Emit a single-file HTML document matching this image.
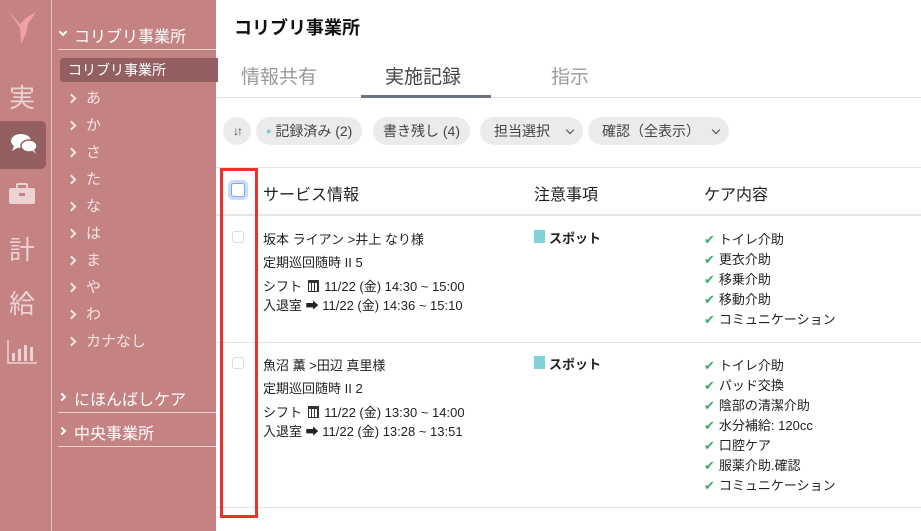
<!DOCTYPE html>
<html><head><meta charset="utf-8"><style>
*{margin:0;padding:0;box-sizing:border-box}
body{width:921px;height:531px;overflow:hidden;background:#fff;font-family:"Liberation Sans","Noto Sans CJK JP",sans-serif;position:relative;color:#222}
.a{position:absolute;white-space:nowrap}
#rail{left:0;top:0;width:52px;height:531px;background:#c48283;border-right:1px solid #e2c0c0}
#side{left:52px;top:0;width:164px;height:531px;background:#c48283}
.rk{color:#ecd3d3;font-size:26px;left:9px}
.kn{color:#f3e3e3;font-size:15px;left:68px}
.kn:before{content:"";position:absolute;left:0;top:8px;width:5px;height:5px;border-right:2px solid #f3e3e3;border-top:2px solid #f3e3e3;transform:rotate(45deg)}
.kn span{margin-left:18px}
.grp{color:#fff;font-size:16px;left:58px;width:158px;border-bottom:1px solid #ead0d0;padding:0 0 2px 16px}
.chev{position:absolute;left:1px;top:8px;width:6px;height:6px;border-right:2px solid #fff;border-top:2px solid #fff;transform:rotate(45deg)}
.tab{font-size:19px;top:62px;color:#999}
.pill{top:117px;height:28px;background:#ebebeb;border-radius:14px;font-size:14px;color:#444;line-height:28px;padding:0 10px}
.hl{height:1px;background:#e4e4e4;left:216px;right:0}
.t{font-size:13px;color:#222}
.c{font-size:13px;color:#222;left:704px}
.c:before{content:"✔";color:#3cab6a;margin-right:4px}
.cb{width:12px;height:12px;border:1px solid #ddd;border-radius:3px;left:232px}
.dd{position:absolute;right:10px;top:10px;width:6px;height:6px;border-right:1.5px solid #444;border-bottom:1.5px solid #444;transform:rotate(45deg)}
.cal{display:inline-block;width:11px;height:12px;border:1px solid #333;border-top:3px solid #333;vertical-align:-1px;background:repeating-linear-gradient(90deg,#fff 0 2px,#333 2px 3px),#fff;margin:0 2px}
</style></head><body>
<div class="a" id="rail"></div>
<div class="a" id="side"></div>
<svg class="a" style="left:6px;top:8px" width="32" height="38" viewBox="0 0 32 38"><path d="M2 2 L14 16 L20 10 L30 4 L22 16 L20 26 L15 36 L14 20 Z" fill="#f2a0a5"/></svg>
<div class="a rk" style="top:78px">実</div>
<div class="a" style="left:0;top:121px;width:46px;height:48px;background:#935f60;border-radius:0 5px 5px 0"></div>
<svg class="a" style="left:10px;top:132px" width="28" height="24" viewBox="0 0 28 24"><ellipse cx="11" cy="9" rx="10" ry="7" fill="#fff"/><path d="M4 14 L2 19 L9 15Z" fill="#fff"/><ellipse cx="19" cy="14" rx="8" ry="6" fill="#fff" stroke="#935f60" stroke-width="1.5"/><path d="M22 18 L26 22 L23 16Z" fill="#fff"/></svg>
<svg class="a" style="left:9px;top:183px" width="26" height="22" viewBox="0 0 26 22"><rect x="8" y="1" width="10" height="5" rx="1" fill="none" stroke="#ecd3d3" stroke-width="2"/><rect x="0" y="5" width="26" height="16" rx="2" fill="#ecd3d3"/><rect x="10" y="10" width="6" height="3" fill="#c48283"/></svg>
<div class="a rk" style="top:230px">計</div>
<div class="a rk" style="top:284px">給</div>
<svg class="a" style="left:7px;top:340px" width="30" height="24" viewBox="0 0 30 24"><path d="M1 0V23H30" stroke="#ecd3d3" stroke-width="1.5" fill="none"/><rect x="5" y="13" width="3" height="8" fill="#ecd3d3"/><rect x="11" y="9" width="3" height="12" fill="#ecd3d3"/><rect x="17" y="5" width="3" height="16" fill="#ecd3d3"/><rect x="23" y="7" width="3" height="14" fill="#ecd3d3"/></svg>
<div class="a grp" style="top:23px"><span class="chev" style="transform:rotate(135deg);top:6px;left:2px"></span>コリブリ事業所</div>
<div class="a" style="left:60px;top:58px;width:158px;height:24px;background:#935f60;border-radius:3px 0 0 3px;color:#fff;font-size:14px;line-height:24px;padding-left:8px">コリブリ事業所</div>
<div class="a kn" style="top:87px"><span>あ</span></div>
<div class="a kn" style="top:114px"><span>か</span></div>
<div class="a kn" style="top:141px"><span>さ</span></div>
<div class="a kn" style="top:168px"><span>た</span></div>
<div class="a kn" style="top:195px"><span>な</span></div>
<div class="a kn" style="top:222px"><span>は</span></div>
<div class="a kn" style="top:249px"><span>ま</span></div>
<div class="a kn" style="top:276px"><span>や</span></div>
<div class="a kn" style="top:303px"><span>わ</span></div>
<div class="a kn" style="top:330px"><span>カナなし</span></div>
<div class="a grp" style="top:386px"><span class="chev"></span>にほんばしケア</div>
<div class="a grp" style="top:420px"><span class="chev"></span>中央事業所</div>

<div class="a" style="left:234px;top:14px;font-size:18px;font-weight:bold;color:#111">コリブリ事業所</div>
<div class="a tab" style="left:241px">情報共有</div>
<div class="a tab" style="left:385px;color:#444">実施記録</div>
<div class="a tab" style="left:551px">指示</div>
<div class="a hl" style="top:97px"></div>
<div class="a" style="left:361px;top:95px;width:130px;height:3px;background:#6b7280"></div>

<div class="a pill" style="left:223px;width:28px;padding:0;text-align:center;font-size:12px;font-weight:bold;letter-spacing:-2px">↓↑</div>
<div class="a pill" style="left:256px"><span style="color:#7cc;font-size:9px;vertical-align:2px">●</span> 記録済み (2)</div>
<div class="a pill" style="left:373px">書き残し (4)</div>
<div class="a pill" style="left:480px;width:103px;padding-left:14px">担当選択 <span class="dd"></span></div>
<div class="a pill" style="left:588px;width:141px;padding-left:14px">確認（全表示）<span class="dd"></span></div>

<div class="a hl" style="top:167px"></div>
<div class="a" style="left:228px;top:180px;width:20px;height:20px;border-radius:5px;background:#c9dcfb"></div>
<div class="a" style="left:231px;top:183px;width:14px;height:14px;border-radius:3px;border:1.5px solid #7ea8ef;background:#fff"></div>
<div class="a" style="left:263px;top:181px;font-size:16px">サービス情報</div>
<div class="a" style="left:534px;top:181px;font-size:16px">注意事項</div>
<div class="a" style="left:704px;top:181px;font-size:16px">ケア内容</div>
<div class="a" style="left:216px;right:0;top:214px;height:2px;background:#e4e6ea"></div>

<div class="a cb" style="top:231px"></div>
<div class="a t" style="left:263px;top:229px">坂本 ライアン &gt;井上 なり様</div>
<div class="a t" style="left:263px;top:252px">定期巡回随時 II 5</div>
<div class="a t" style="left:263px;top:276px">シフト <span class="cal"></span> 11/22 (金) 14:30 ~ 15:00</div>
<div class="a t" style="left:263px;top:295px">入退室 <b>➡</b> 11/22 (金) 14:36 ~ 15:10</div>
<div class="a" style="left:534px;top:230px;width:11px;height:13px;background:#82d0da"></div>
<div class="a t" style="left:549px;top:228px;font-weight:bold">スポット</div>
<div class="a c" style="top:229px">トイレ介助</div>
<div class="a c" style="top:249px">更衣介助</div>
<div class="a c" style="top:269px">移乗介助</div>
<div class="a c" style="top:289px">移動介助</div>
<div class="a c" style="top:309px">コミュニケーション</div>
<div class="a hl" style="top:342px"></div>

<div class="a cb" style="top:357px"></div>
<div class="a t" style="left:263px;top:355px">魚沼 薫 &gt;田辺 真里様</div>
<div class="a t" style="left:263px;top:378px">定期巡回随時 II 2</div>
<div class="a t" style="left:263px;top:402px">シフト <span class="cal"></span> 11/22 (金) 13:30 ~ 14:00</div>
<div class="a t" style="left:263px;top:421px">入退室 <b>➡</b> 11/22 (金) 13:28 ~ 13:51</div>
<div class="a" style="left:534px;top:356px;width:11px;height:13px;background:#82d0da"></div>
<div class="a t" style="left:549px;top:354px;font-weight:bold">スポット</div>
<div class="a c" style="top:355px">トイレ介助</div>
<div class="a c" style="top:375px">パッド交換</div>
<div class="a c" style="top:395px">陰部の清潔介助</div>
<div class="a c" style="top:415px">水分補給: 120cc</div>
<div class="a c" style="top:435px">口腔ケア</div>
<div class="a c" style="top:455px">服薬介助.確認</div>
<div class="a c" style="top:475px">コミュニケーション</div>
<div class="a hl" style="top:507px"></div>

<div class="a" style="left:220px;top:168px;width:38px;height:350px;border:3px solid #e8322a"></div>
</body></html>
